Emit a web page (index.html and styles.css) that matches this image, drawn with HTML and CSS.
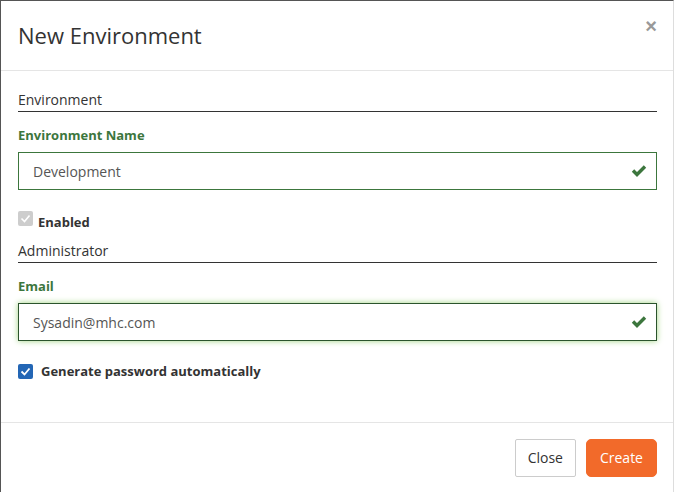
FILE: index.html
```html
<!DOCTYPE html>
<html lang="en">
<head>
	<meta charset="UTF-8">
	<title>New Environment</title>
	<link rel="stylesheet" href="styles.css">
</head>
<body>
	<div class="modal">
		<div class="modal-header">
			<h4 class="modal-title">New Environment</h4>
			<span class="close">&times;</span>
		</div>
		<div class="modal-body">
			<div class="legend">Environment</div>
			<div class="form-group">
				<label class="control-label">Environment Name</label>
				<div class="input-wrap">
					<input class="form-control" type="text" value="Development">
					<svg class="ok" width="16" height="13" viewBox="0 0 16 13"><polyline points="2,6.5 6,10.5 14,2.5" fill="none" stroke="#3c763d" stroke-width="3.4"/></svg>
				</div>
			</div>
			<div class="check disabled">
				<span class="box"><svg width="15" height="15" viewBox="0 0 15 15"><polyline points="3.5,7.5 6.5,10.5 11.5,4.5" fill="none" stroke="#fff" stroke-width="1.6"/></svg></span>
				<span class="check-label">Enabled</span>
			</div>
			<div class="legend">Administrator</div>
			<div class="form-group">
				<label class="control-label">Email</label>
				<div class="input-wrap">
					<input class="form-control focus" type="text" value="Sysadin@mhc.com">
					<svg class="ok" width="16" height="13" viewBox="0 0 16 13"><polyline points="2,6.5 6,10.5 14,2.5" fill="none" stroke="#3c763d" stroke-width="3.4"/></svg>
				</div>
			</div>
			<div class="check checked">
				<span class="box"><svg width="15" height="15" viewBox="0 0 15 15"><polyline points="3.5,7.5 6.5,10.5 11.5,4.5" fill="none" stroke="#fff" stroke-width="1.8"/></svg></span>
				<span class="check-label">Generate password automatically</span>
			</div>
		</div>
		<div class="modal-footer">
			<button class="btn btn-default">Close</button>
			<button class="btn btn-primary">Create</button>
		</div>
	</div>
</body>
</html>
```
FILE: styles.css
```css
*{margin: 0;padding: 0;box-sizing: border-box;}
html,body{height: 100%;}
body{
	font-family: "Open Sans", "Noto Sans", sans-serif;
	font-size: 14px;
	color: #333;
	background: #fff;
}
.modal{
	height: 100%;
	border-left: 1px solid #555;
	border-top: 1px solid #555;
	border-right: 1px solid #ddd;
	display: flex;
	flex-direction: column;
}
.modal-header{
	height: 70px;
	padding: 0 17px;
	border-bottom: 1px solid #e5e5e5;
	display: flex;
	align-items: center;
	justify-content: space-between;
}
.modal-title{
	font-size: 22px;
	font-weight: normal;
	color: #333;
	margin-top: -2px;
}
.close{
	font-size: 20px;
	color: #999;
	margin-top: -18px;
	margin-right: -1px;
	font-family: "Liberation Sans", sans-serif;
	font-weight: bold;
}
.modal-body{
	flex: 1;
	padding: 19px 16px 0 17px;
}
.legend{
	font-size: 14px;
	line-height: 20px;
	padding-bottom: 1px;
	border-bottom: 1px solid #333;
	margin-bottom: 13px;
}
.form-group{
	margin-bottom: 20px;
}
.control-label{
	display: block;
	font-weight: bold;
	font-size: 13px;
	color: #3c763d;
	line-height: 20px;
	margin-bottom: 7px;
}
.input-wrap{
	position: relative;
}
.form-control{
	display: block;
	width: 100%;
	height: 38px;
	padding: 0 14px;
	border: 1px solid #3c763d;
	font-family: inherit;
	font-size: 14px;
	color: #555;
	background: #fff;
	outline: none;
}
.form-control.focus{
	border-color: #2b542c;
	box-shadow: 0 0 6px #9fd37f;
}
.ok{
	position: absolute;
	right: 10px;
	top: 12px;
}
.check{
	display: flex;
	align-items: center;
	gap: 6px;
	font-weight: bold;
	font-size: 13px;
	line-height: 20px;
}
.check .box{
	width: 15px;
	height: 15px;
	border-radius: 2px;
	display: flex;
}
.check.disabled{
	margin-top: -1px;
	margin-bottom: 9px;
}
.check.disabled .box{
	background: #cdcdcd;
	margin-top: -5px;
}
.check.disabled .check-label{
	margin-top: 3px;
	margin-left: -1px;
}
.check.checked{
	margin-top: 0;
	gap: 8px;
}
.check.checked .box{
	background: #2366b5;
}
.modal-footer{
	height: 70px;
	border-top: 1px solid #e5e5e5;
	display: flex;
	justify-content: flex-end;
	align-items: center;
	gap: 10px;
	padding: 0 16px 0 0;
}
.btn{
	height: 38px;
	padding: 0 12px;
	font-family: inherit;
	font-size: 14px;
	border: 1px solid #ccc;
	border-radius: 2px;
	background: #fff;
	color: #333;
}
.btn-primary{
	background: #f26a2a;
	border-color: #f26a2a;
	color: #fff;
	border-radius: 5px;
	padding: 0 13px;
}
```
